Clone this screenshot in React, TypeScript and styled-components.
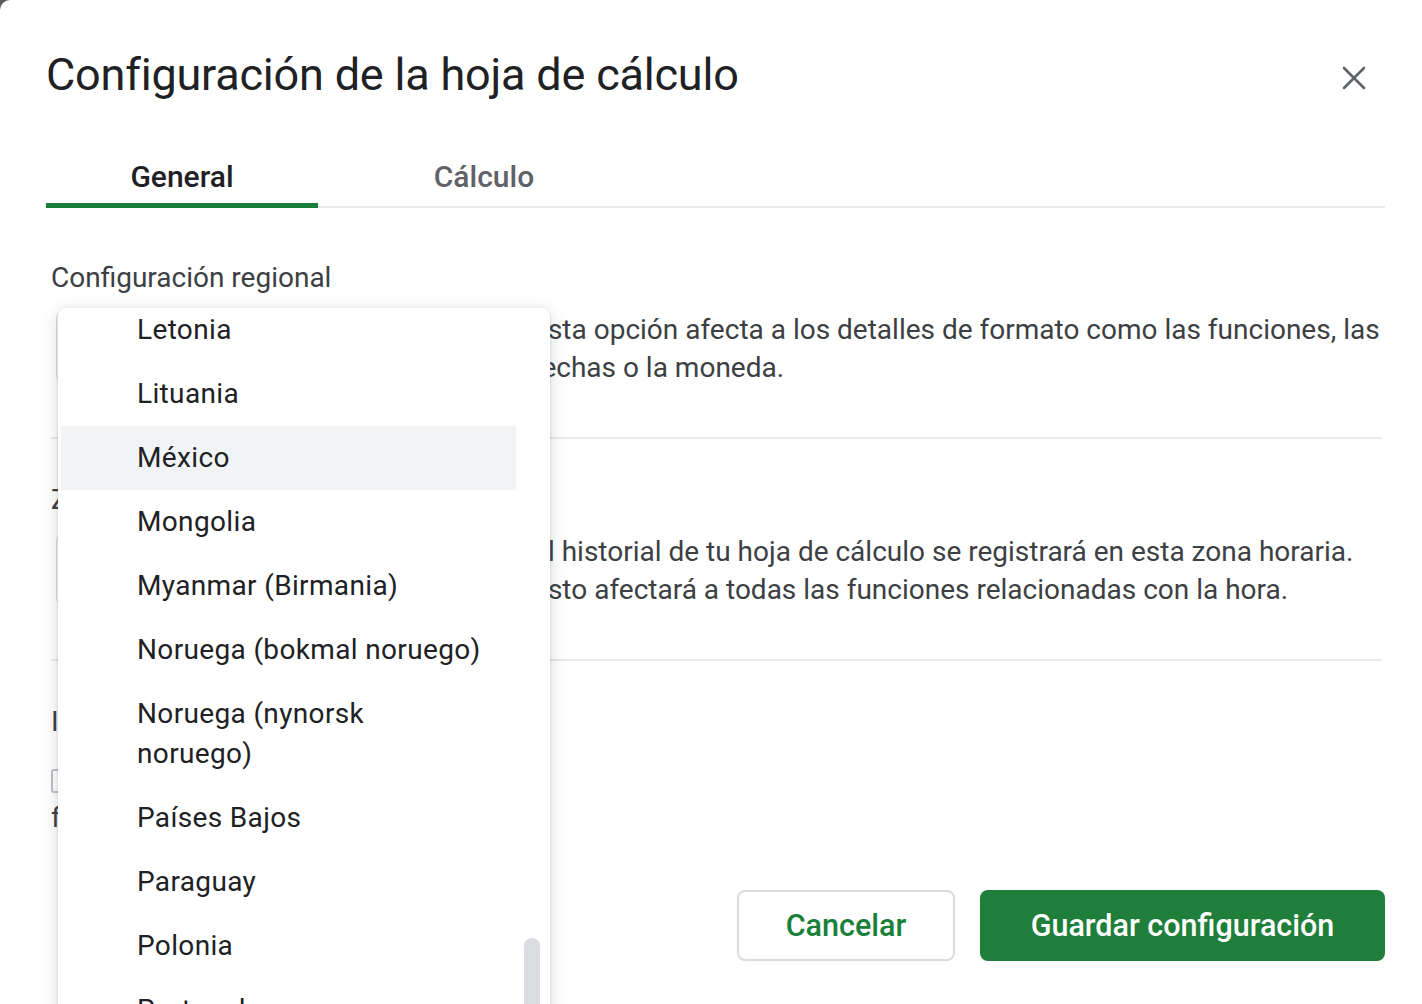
import React, { useLayoutEffect, useRef } from "react";
import styled, { createGlobalStyle } from "styled-components";

const GlobalStyle = createGlobalStyle`
  html, body {
    margin: 0;
    padding: 0;
    height: 100%;
    overflow: hidden;
    background: #5b5b5b;
  }
  body {
    font-family: Roboto, "Liberation Sans", Arial, sans-serif;
    -webkit-font-smoothing: antialiased;
  }
`;

const Dialog = styled.div`
  position: relative;
  width: 100vw;
  height: 100vh;
  box-sizing: border-box;
  background: #fff;
  border-top-left-radius: 10px;
  padding: 48px 37px 0 46px;
  overflow: hidden;
`;

const Header = styled.div`
  display: flex;
  align-items: center;
  justify-content: space-between;
`;

const Title = styled.h1`
  margin: 0;
  font-size: 45px;
  font-weight: 400;
  line-height: 54px;
  color: #202124;
  letter-spacing: -0.2px;
`;

const CloseButton = styled.button`
  width: 48px;
  height: 48px;
  margin-right: 7px;
  margin-top: 6px;
  padding: 0;
  border: none;
  background: none;
  display: flex;
  align-items: center;
  justify-content: center;
  cursor: pointer;
`;

const TabBar = styled.div`
  display: flex;
  gap: 30px;
  margin-top: 47px;
  box-shadow: inset 0 -2px 0 #e8eaed;
`;

const Tab = styled.div<{ $active?: boolean }>`
  width: 272px;
  height: 59px;
  box-sizing: border-box;
  display: flex;
  align-items: center;
  justify-content: center;
  border-bottom: 5px solid ${(p) => (p.$active ? "#188038" : "transparent")};
  font-size: 30px;
  font-weight: 500;
  color: ${(p) => (p.$active ? "#202124" : "#5f6368")};
`;

const Content = styled.div`
  padding: 51px 3px 0 5px;
`;

const Section = styled.section<{ $divider?: boolean; $first?: boolean }>`
  padding-top: ${(p) => (p.$first ? "0" : "42px")};
  padding-bottom: ${(p) => (p.$divider ? "50px" : "0")};
  border-bottom: ${(p) => (p.$divider ? "2px solid #e8eaed" : "none")};
`;

const SectionLabel = styled.div`
  font-size: 28px;
  line-height: 38px;
  color: #3c4043;
`;

const Row = styled.div`
  display: grid;
  grid-template-columns: 457px 1fr;
  column-gap: 24px;
  margin-top: 14px;
`;

const SelectBox = styled.div`
  position: relative;
  margin-left: 5px;
  height: 72px;
  box-sizing: border-box;
  border: 1px solid #dadce0;
  border-radius: 8px;
  display: flex;
  align-items: center;
  justify-content: space-between;
  padding: 0 20px;
  font-size: 26px;
  color: #202124;
`;

const Description = styled.p`
  margin: 0;
  font-size: 28px;
  line-height: 38px;
  color: #3c4043;
  white-space: nowrap;
`;

const CheckParagraph = styled.p`
  margin: 20px 0 0;
  font-size: 28px;
  line-height: 38px;
  color: #3c4043;
`;

const CheckBox = styled.span`
  display: inline-block;
  width: 24px;
  height: 24px;
  box-sizing: border-box;
  border: 2px solid #bdc1c6;
  border-radius: 3px;
  vertical-align: -4px;
  margin-right: 16px;
`;

const Footer = styled.div`
  display: flex;
  justify-content: flex-end;
  gap: 25px;
  margin-top: 53px;
`;

const Button = styled.button<{ $primary?: boolean }>`
  height: 71px;
  width: ${(p) => (p.$primary ? "405px" : "218px")};
  box-sizing: border-box;
  border-radius: 8px;
  border: ${(p) => (p.$primary ? "none" : "2px solid #dadce0")};
  background: ${(p) => (p.$primary ? "#1e7e3a" : "#fff")};
  color: ${(p) => (p.$primary ? "#fff" : "#188038")};
  font-family: Roboto, "Liberation Sans", Arial, sans-serif;
  font-size: 30.5px;
  font-weight: 500;
  cursor: pointer;
`;

const Menu = styled.div`
  position: absolute;
  left: 1px;
  top: -4px;
  width: 492px;
  height: 740px;
  background: #fff;
  border-radius: 8px;
  box-shadow: 0 4px 18px rgba(60, 64, 67, 0.18), 0 1px 3px rgba(60, 64, 67, 0.2);
  z-index: 10;
  overflow: hidden;
`;

const ListViewport = styled.div`
  height: 100%;
  overflow-y: auto;
  scrollbar-width: none;
  &::-webkit-scrollbar {
    display: none;
  }
`;

const OptionList = styled.ul`
  margin: 0;
  padding: 8px 34px 8px 3px;
  list-style: none;
`;

const Option = styled.li<{ $highlight?: boolean }>`
  padding: 12px 16px 12px 76px;
  font-size: 28px;
  letter-spacing: 0.35px;
  line-height: 40px;
  color: #202124;
  white-space: pre-line;
  background: ${(p) => (p.$highlight ? "#f1f3f4" : "transparent")};
`;

const ScrollThumb = styled.div`
  position: absolute;
  right: 10px;
  top: 630px;
  width: 16px;
  height: 120px;
  border-radius: 8px;
  background: #dadce0;
`;

const countries = [
  "Japón",
  "Kazajistán",
  "Kenia",
  "Kuwait",
  "Laos",
  "Letonia",
  "Lituania",
  "México",
  "Mongolia",
  "Myanmar (Birmania)",
  "Noruega (bokmal noruego)",
  "Noruega (nynorsk\nnoruego)",
  "Países Bajos",
  "Paraguay",
  "Polonia",
  "Portugal",
  "Puerto Rico",
  "Reino Unido",
  "República Checa",
];

function CloseIcon() {
  return (
    <svg width="24" height="24" viewBox="0 0 24 24" aria-hidden="true">
      <path d="M2 2 L22 22 M22 2 L2 22" stroke="#5f6368" strokeWidth="2.6" strokeLinecap="round" fill="none" />
    </svg>
  );
}

function LocaleMenu() {
  const ref = useRef<HTMLDivElement>(null);
  useLayoutEffect(() => {
    if (ref.current) ref.current.scrollTop = 338;
  }, []);
  return (
    <Menu role="listbox">
      <ListViewport ref={ref}>
        <OptionList>
          {countries.map((c) => (
            <Option key={c} $highlight={c === "México"}>
              {c}
            </Option>
          ))}
        </OptionList>
      </ListViewport>
      <ScrollThumb />
    </Menu>
  );
}

export default function App() {
  return (
    <>
      <GlobalStyle />
      <Dialog>
        <Header>
          <Title>Configuración de la hoja de cálculo</Title>
          <CloseButton aria-label="Cerrar">
            <CloseIcon />
          </CloseButton>
        </Header>
        <TabBar>
          <Tab $active>General</Tab>
          <Tab>Cálculo</Tab>
        </TabBar>
        <Content>
          <Section $first $divider>
            <SectionLabel>Configuración regional</SectionLabel>
            <Row>
              <SelectBox>
                <span>México</span>
                <LocaleMenu />
              </SelectBox>
              <Description>
                Esta opción afecta a los detalles de formato como las funciones, las
                <br />
                fechas o la moneda.
              </Description>
            </Row>
          </Section>
          <Section $divider>
            <SectionLabel>Zona horaria</SectionLabel>
            <Row>
              <SelectBox>
                <span>(GMT-06:00) Ciudad de México</span>
              </SelectBox>
              <Description>
                El historial de tu hoja de cálculo se registrará en esta zona horaria.
                <br />
                Esto afectará a todas las funciones relacionadas con la hora.
              </Description>
            </Row>
          </Section>
          <Section>
            <SectionLabel>Idioma de visualización</SectionLabel>
            <CheckParagraph>
              <CheckBox />
              Habilitar sugerencias de
              <br />
              fórmulas
            </CheckParagraph>
          </Section>
        </Content>
        <Footer>
          <Button>Cancelar</Button>
          <Button $primary>Guardar configuración</Button>
        </Footer>
      </Dialog>
    </>
  );
}
